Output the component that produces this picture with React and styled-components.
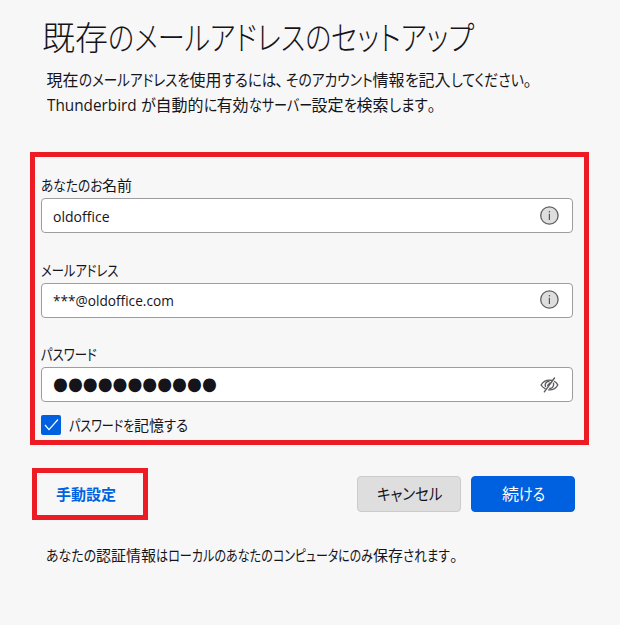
import { useLayoutEffect, useRef, useState } from "react";
import styled, { createGlobalStyle } from "styled-components";

// each run of text has its own advance width, kana are set narrower than kanji
function Run({ text, width }) {
    const ref = useRef(null);
    const [scale, setScale] = useState(1);
    const isMark = text === "、" || text === "。";

    useLayoutEffect(() => {
        if (!isMark) {
            setScale(width / ref.current.offsetWidth);
        }
    }, [text, width, isMark])

    return (
        <RunBox $width={width}>
            <RunText ref={ref} style={{ transform: `scaleX(${scale})` }}>{text}</RunText>
        </RunBox>
    )
}

function Runs({ items }) {
    return items.map(([text, width], i) => <Run key={i} text={text} width={width} />)
}

function InfoIcon() {
    return (
        <svg width="20" height="20" viewBox="0 0 20 20">
            <circle cx="10.4" cy="9.500" r="8.7" fill="#dedede" stroke="#5f5f63" strokeWidth="1.3" />
            <path d="M10.400 7.800V14" stroke="#55555a" strokeWidth="1.2" />
            <circle cx="10.4" cy="5.8" r="0.8" fill="#55555a" />
        </svg>
    )
}

function HiddenIcon() {
    return (
        <svg width="20" height="16" viewBox="-0.8 0 20 16" fill="none" stroke="#5b5b60" strokeWidth="1.4" strokeLinecap="round">
            <path d="M5.200 11.600C3.600 10.800 2.300 9.600 1.300 8C3 4.900 6.100 3.100 9.600 3.100C10.600 3.100 11.500 3.200 12.300 3.500" />
            <path d="M14.800 4.500C16.200 5.300 17.300 6.500 18 8C16.300 11.100 13.200 12.900 9.600 12.900L8.800 12.900" />
            <path d="M5.700 9.400C4.700 7 6.100 4.600 9.200 4.300" />
            <path d="M13.700 6.300C14.400 9 12.700 11.300 10 11.500" />
            <path d="M8 8.300L10.200 6" />
            <path d="M14.700 1L4.500 14.800" />
        </svg>
    )
}

function Field({ label, children, icon, id }) {
    return (
        <FieldBox>
            <Label id={id}><Runs items={label} /></Label>
            <InputBox aria-labelledby={id}>
                {children}
                <IconBox>{icon}</IconBox>
            </InputBox>
        </FieldBox>
    )
}

export default function App() {
    const [remember, setRemember] = useState(true);

    return (
        <>
            <GlobalStyle />
            <Page>
                <Title>
                    <Runs items={[["既存", 66], ["のメールアドレスの", 223], ["セットアップ", 143]]} />
                </Title>
                <Description>
                    <p>
                        <Runs items={[["現在", 32], ["のメールアドレスを", 111], ["使用", 32], ["するには", 54], ["、", 10], ["そのアカウント", 87], ["情報", 32], ["を", 14], ["記入", 32], ["してください", 73], ["。", 10]]} />
                    </p>
                    <p>
                        <Latin><Run text="Thunderbird" width={90} /></Latin>
                        <Runs items={[["\u00a0", 4], ["が", 15], ["自動的", 48], ["に", 13], ["有効", 32], ["なサーバー", 63], ["設定", 32], ["を", 13], ["検索", 32], ["します", 39], ["。", 10]]} />
                    </p>
                </Description>

                <Form>
                    <Field id="name" label={[["あなたのお", 61], ["名前", 30]]} icon={<InfoIcon />}>
                        <Value><Run text="oldoffice" width={57} /></Value>
                    </Field>
                    <Field id="mail" label={[["メールアドレス", 77]]} icon={<InfoIcon />}>
                        <Value><Run text="***@oldoffice.com" width={121} /></Value>
                    </Field>
                    <Field id="password" label={[["パスワード", 56]]} icon={<HiddenIcon />}>
                        <Dots><Run text="●●●●●●●●●●●" width={164} /></Dots>
                    </Field>
                    <Remember onClick={() => setRemember(!remember)}>
                        <Checkbox $checked={remember}>
                            {remember && (
                                <svg width="20" height="20" viewBox="0 0 20 20" fill="none">
                                    <path d="M4 10L8 14.600L17 4.500" stroke="#fff" strokeWidth="1.2" />
                                </svg>
                            )}
                        </Checkbox>
                        <span><Runs items={[["パスワードを", 65], ["記憶", 30], ["する", 24]]} /></span>
                    </Remember>
                </Form>

                <Actions>
                    <ManualBox>
                        <LinkButton><Run text="手動設定" width={60} /></LinkButton>
                    </ManualBox>
                    <Buttons>
                        <Button><Run text="キャンセル" width={65} /></Button>
                        <Button $primary><Runs items={[["続", 17], ["ける", 26]]} /></Button>
                    </Buttons>
                </Actions>

                <Footnote>
                    <Runs items={[["あなたの", 50], ["認証情報", 60], ["はローカルのあなたの", 117], ["コンピュータにのみ", 100], ["保存", 30], ["されます", 47], ["。", 10]]} />
                </Footnote>
            </Page>
        </>
    )
}

const GlobalStyle = createGlobalStyle`
    * {
        box-sizing: border-box;
    }

    body {
        margin: 0;
        background: #f7f7f7;
        color: #15141a;
        font-family: "Open Sans", "Noto Sans CJK JP", sans-serif;
        font-feature-settings: "palt";
    }

    h1, p {
        margin: 0;
    }

    button {
        font: inherit;
        font-feature-settings: inherit;
        color: inherit;
        cursor: pointer;
    }
`

const RunBox = styled.span`
    display: inline-block;
    width: ${({ $width }) => $width}px;
    white-space: nowrap;
    text-align: left;
`

const RunText = styled.span`
    display: inline-block;
    transform-origin: left center;
`

const Page = styled.div`
    display: flex;
    flex-direction: column;
    width: 620px;
    height: 625px;
    padding: 13px 30px 0;
    overflow: hidden;
    white-space: nowrap;
`

const Title = styled.h1`
    height: 46px;
    padding-left: 12px;

    font-family: "Noto Sans CJK JP", sans-serif;
    font-size: 33px;
    font-weight: 300;
    line-height: 46px;
`

const Description = styled.div`
    padding: 9px 0 0 16.500px;
    margin-bottom: 35px;

    font-size: 16px;
    line-height: 24px;

    p {
        height: 24.500px;
    }
`

const Latin = styled.span`
    font-size: 16.500px;
`

const Form = styled.div`
    width: 559px;
    height: 293px;
    padding: 17px 11px 0 6px;

    border: 5px solid #ed1c24;

    font-size: 15px;
`

const FieldBox = styled.div`
    height: 84.500px;
`

const Label = styled.div`
    height: 24px;
    line-height: 22px;
`

const InputBox = styled.div`
    display: flex;
    align-items: center;
    justify-content: space-between;

    height: 35px;
    padding: 0 13px 0 10.500px;

    background: #ffffff;
    border: 1px solid #9d9da0;
    border-radius: 4px;

    line-height: 20px;
`

const Value = styled.span`
    padding-top: 0.500px;
    font-size: 15px;
`

const IconBox = styled.div`
    display: flex;
`

const Dots = styled.div`
    padding-bottom: 1px;
    font-family: "DejaVu Sans", sans-serif;
    font-size: 18px;
`

const Remember = styled.div`
    display: flex;
    align-items: center;
    gap: 8px;

    height: 20px;
    margin-top: -13px;

    line-height: 20px;
    cursor: pointer;
`

const Checkbox = styled.div`
    width: 20px;
    height: 20px;
    border-radius: 2px;

    background: ${({ $checked }) => $checked ? "#0061e0" : "#ffffff"};

    svg {
        display: block;
    }
`

const Actions = styled.div`
    display: flex;
    justify-content: space-between;

    margin-top: 23px;
    padding: 0 15px 0 2px;
`

const ManualBox = styled.div`
    display: flex;
    align-items: center;

    width: 116px;
    height: 52px;
    padding-left: 19px;

    border: 5px solid #ed1c24;
`

const LinkButton = styled.button`
    padding: 0;
    border: none;
    background: none;

    color: #0061e0;
    font-size: 15px;
    font-weight: 700;
    line-height: 22px;
`

const Buttons = styled.div`
    display: flex;
    gap: 10px;
    padding-top: 8px;
`

const Button = styled.button`
    width: 104px;
    height: 36px;
    padding: 0;

    border: 1px solid ${({ $primary }) => $primary ? "#0061e0" : "#cbcbcb"};
    border-radius: 4px;
    background: ${({ $primary }) => $primary ? "#0061e0" : "#dedede"};

    color: ${({ $primary }) => $primary ? "#ffffff" : "#15141a"};
    font-size: 16px;
    line-height: 22px;
`

const Footnote = styled.p`
    margin-top: 24px;
    padding-left: 16px;

    font-size: 15px;
    line-height: 22px;
`
